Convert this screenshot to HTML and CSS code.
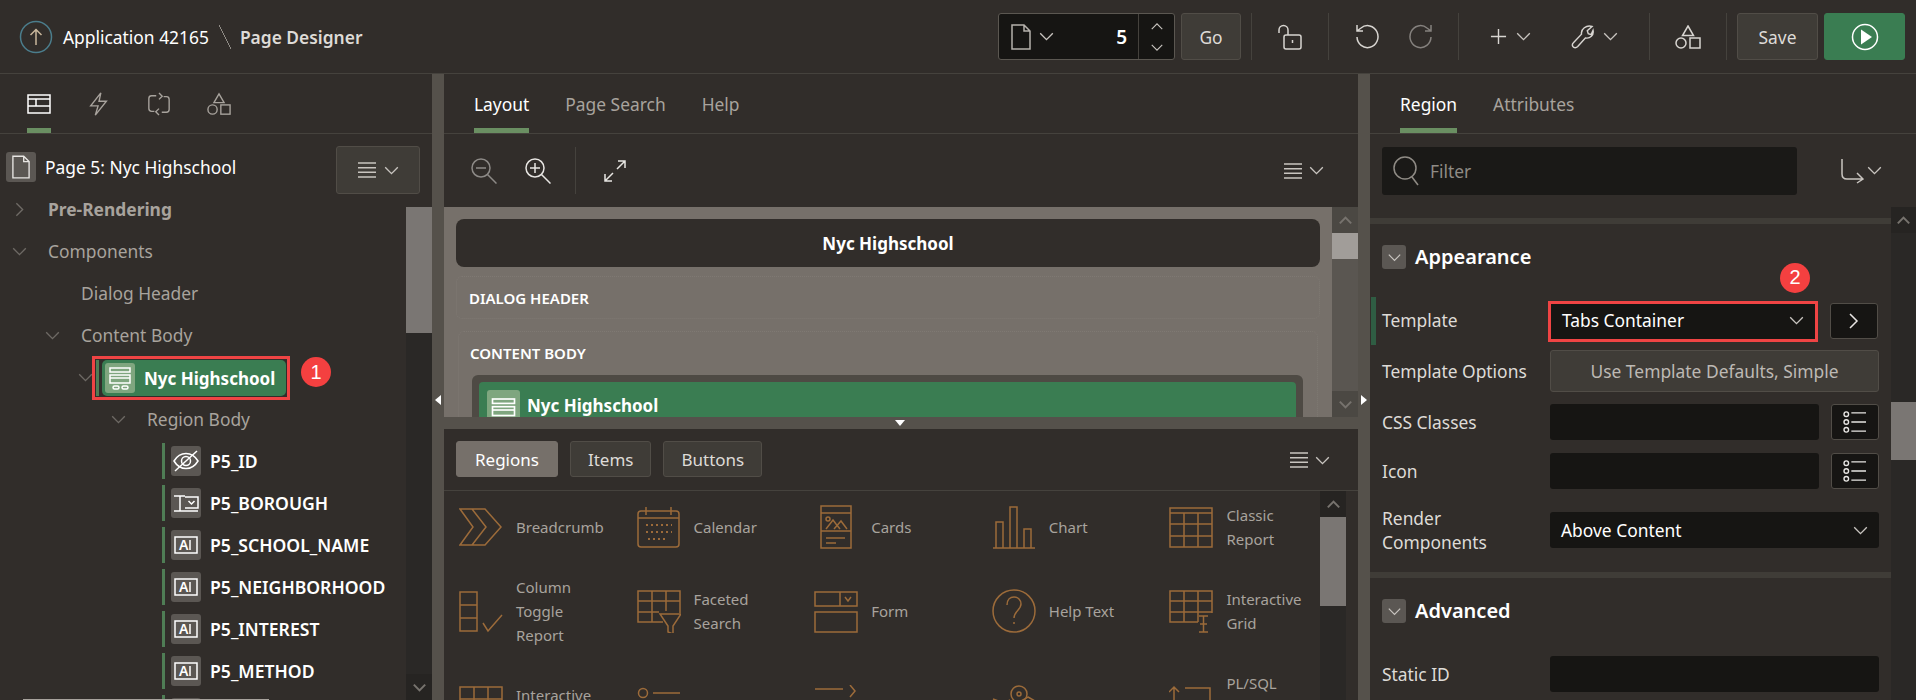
FILE: index.html
```html
<!DOCTYPE html>
<html lang="en">
<head>
    <meta charset="UTF-8">
    <meta name="viewport" content="width=device-width, initial-scale=1.0">
    <title>Page Designer</title>
    <link rel="stylesheet" href="styles.css">
</head>
<body>
    <svg class="sprite" xmlns="http://www.w3.org/2000/svg">
        <symbol id="chev" viewBox="0 0 16 10"><path d="M1 1.5l7 7 7-7"/></symbol>
        <symbol id="lines" viewBox="0 0 18 16"><path d="M0 1h18M0 5.700h18M0 10.300h18M0 15h18"/></symbol>
        <symbol id="shapes" viewBox="0 0 26 24"><path d="M13 1l5.500 9.500h-11z"/><circle cx="6" cy="18" r="5"/><rect x="15" y="13" width="10" height="10"/></symbol>
        <symbol id="file" viewBox="0 0 20 26"><path d="M1 1h12l6 6v18H1zM13 1v6h6"/></symbol>
        <symbol id="zoom-out" viewBox="0 0 26 26"><circle cx="10" cy="10" r="9"/><path d="M16.500 16.500l9 9M5 10h10"/></symbol>
        <symbol id="zoom-in" viewBox="0 0 26 26"><circle cx="10" cy="10" r="9"/><path d="M16.500 16.500l9 9M5 10h10M10 5v10"/></symbol>
        <symbol id="list" viewBox="0 0 26 24"><circle cx="3.500" cy="3.500" r="2.500"/><circle cx="3.500" cy="12" r="2.500"/><circle cx="3.500" cy="20.500" r="2.500"/><path d="M9 2h16M9 12h16M9 22h16"/></symbol>
        <symbol id="region" viewBox="0 0 24 20"><rect x="1" y="1" width="22" height="18"/><path d="M1 5h22M1 12h22M9 5v7"/></symbol>
        <symbol id="region-tile" viewBox="0 0 30 30"><rect x="5" y="5" width="20" height="4"/><rect x="5" y="12" width="20" height="8"/><rect x="8" y="23" width="6" height="3" rx="1.500"/><rect x="17" y="23" width="6" height="3" rx="1.500"/><path d="M5 15h20"/></symbol>
        <symbol id="text-field" viewBox="0 0 30 30"><rect x="4" y="7" width="22" height="16"/><path d="M19 10v10"/><text x="8" y="20" class="glyph">A</text></symbol>
    </svg>

    <header class="topbar">
        <div class="crumbs">
            <svg class="app-up" viewBox="0 0 34 34"><circle class="ring" cx="17" cy="17" r="15.500"/><path d="M17 25V10M11.500 15l5.500-5.500 5.500 5.500"/></svg>
            <span class="app-name">Application 42165</span>
            <span class="slash"></span>
            <span class="page-name">Page Designer</span>
        </div>
        <div class="tools">
            <div class="page-picker">
                <svg class="ic-file"><use href="#file"/></svg>
                <svg class="ic-chev"><use href="#chev"/></svg>
                <span class="page-num">5</span>
                <div class="stepper">
                    <svg class="ic-chev up"><use href="#chev"/></svg>
                    <svg class="ic-chev"><use href="#chev"/></svg>
                </div>
            </div>
            <button class="btn go">Go</button>
            <i class="sep first"></i>
            <div class="tool-group w76">
                <svg class="ic-lock" viewBox="0 0 26 26"><path d="M2 9V6a4.500 4.500 0 0 1 9 0v5"/><rect x="7" y="11" width="17" height="14" rx="2"/><path d="M15.500 16v3"/></svg>
            </div>
            <i class="sep"></i>
            <div class="tool-group w129 gap28">
                <svg class="ic-undo" viewBox="0 0 26 26"><path d="M3 13a10.500 11 0 1 0 4-9l-4 3M3 1v6h6"/></svg>
                <svg class="ic-undo dim" viewBox="0 0 26 26"><path d="M23 13a10.500 11 0 1 1-4-9l4 3M23 1v6h-6"/></svg>
            </div>
            <i class="sep"></i>
            <div class="tool-group w190 gap40">
                <span class="with-chev"><svg class="ic-plus" viewBox="0 0 18 18"><path d="M9 1v16M1 9h16"/></svg><svg class="ic-chev"><use href="#chev"/></svg></span>
                <span class="with-chev"><svg class="ic-wrench" viewBox="0 0 24 26"><path d="M22 2l-5 4.500 1 3 3 1L23 6c1 5-3 9-8 8L7 23c-1.500 1.500-4 1.500-5 0s-.5-3 .5-4L11 10c-1-5 5-10 11-8z"/></svg><svg class="ic-chev"><use href="#chev"/></svg></span>
            </div>
            <i class="sep"></i>
            <div class="tool-group w76"><svg class="ic-shapes"><use href="#shapes"/></svg></div>
            <i class="sep last"></i>
            <button class="btn save">Save</button>
            <button class="btn run">
                <svg viewBox="0 0 28 28"><circle cx="14" cy="14" r="12.500"/><path class="play" d="M10 6.500l11 7.500-11 7.500z"/></svg>
            </button>
        </div>
    </header>

    <main class="designer">
        <section class="panel tree-panel">
            <nav class="tabs icon-tabs">
                <span class="tab active"><svg class="ic-tab"><use href="#region"/></svg></span>
                <span class="tab"><svg class="ic-tab" viewBox="0 0 24 26"><path d="M14 1L3 15h8l-3 10 12-15h-8z"/></svg></span>
                <span class="tab"><svg class="ic-tab" viewBox="0 0 26 26"><path d="M10 4H5a3 3 0 0 0-3 3v11a3 3 0 0 0 3 3h3M16 22h5a3 3 0 0 0 3-3V8a3 3 0 0 0-3-3h-3M13 1l3.500 3.500L13 8M13 18l-3.500 3.500L13 25"/></svg></span>
                <span class="tab"><svg class="ic-tab"><use href="#shapes"/></svg></span>
            </nav>
            <div class="tree-wrap">
                <div class="page-row">
                    <span class="page-tile"><svg><use href="#file"/></svg></span>
                    <span class="page-title">Page 5: Nyc Highschool</span>
                    <button class="btn menu-btn"><svg class="ic-lines"><use href="#lines"/></svg><svg class="ic-chev"><use href="#chev"/></svg></button>
                </div>
                <div class="tree">
                    <div class="node l0 strong"><svg class="ic-chev side"><use href="#chev"/></svg><span>Pre-Rendering</span></div>
                    <div class="node l0"><svg class="ic-chev open"><use href="#chev"/></svg><span>Components</span></div>
                    <div class="node l1"><i class="no-chev"></i><span>Dialog Header</span></div>
                    <div class="node l1"><svg class="ic-chev open"><use href="#chev"/></svg><span>Content Body</span></div>
                    <div class="node l2">
                        <svg class="ic-chev open tight"><use href="#chev"/></svg>
                        <div class="marked">
                            <i class="mark-bar"></i>
                            <div class="pill">
                                <span class="pill-tile"><svg><use href="#region-tile"/></svg></span>
                                <span>Nyc Highschool</span>
                            </div>
                            <b class="badge badge-one">1</b>
                        </div>
                    </div>
                    <div class="node l3"><svg class="ic-chev open"><use href="#chev"/></svg><span>Region Body</span></div>
                    <div class="item"><i class="mark-bar"></i><span class="tile"><svg viewBox="0 0 30 30"><path d="M3 15c3-5 7.500-7.500 12-7.500S24 10 27 15c-3 5-7.500 7.500-12 7.500S6 20 3 15z"/><circle cx="15" cy="15" r="4.500"/><path d="M4 25L26 5"/></svg></span><span>P5_ID</span></div>
                    <div class="item"><i class="mark-bar"></i><span class="tile"><svg viewBox="0 0 30 30"><path d="M3 8h11M3 23h24M9 8v15M14 9h13v11H14"/><path d="M17.500 13l3 3 3-3"/></svg></span><span>P5_BOROUGH</span></div>
                    <div class="item"><i class="mark-bar"></i><span class="tile"><svg><use href="#text-field"/></svg></span><span>P5_SCHOOL_NAME</span></div>
                    <div class="item"><i class="mark-bar"></i><span class="tile"><svg><use href="#text-field"/></svg></span><span>P5_NEIGHBORHOOD</span></div>
                    <div class="item"><i class="mark-bar"></i><span class="tile"><svg><use href="#text-field"/></svg></span><span>P5_INTEREST</span></div>
                    <div class="item"><i class="mark-bar"></i><span class="tile"><svg><use href="#text-field"/></svg></span><span>P5_METHOD</span></div>
                    <div class="item"><i class="mark-bar"></i><span class="tile"><svg><use href="#text-field"/></svg></span></div>
                </div>
                <div class="scrollbar tree-scroll">
                    <i class="sb-thumb" ></i>
                    <i class="sb-fill"></i>
                    <span class="sb-arrow"><svg class="ic-chev"><use href="#chev"/></svg></span>
                </div>
                <i class="h-thumb"></i>
            </div>
        </section>

        <div class="gutter"><i class="tri tri-left"></i></div>

        <section class="center">
            <div class="panel layout-pane">
                <nav class="tabs">
                    <span class="tab active">Layout</span>
                    <span class="tab">Page Search</span>
                    <span class="tab">Help</span>
                </nav>
                <div class="layout-tools">
                    <svg class="ic-zoom dim"><use href="#zoom-out"/></svg>
                    <svg class="ic-zoom"><use href="#zoom-in"/></svg>
                    <i class="sep"></i>
                    <svg class="ic-expand" viewBox="0 0 22 22"><path d="M13 9l8-8M14 1h7v7M9 13l-8 8M1 14v7h7"/></svg>
                    <span class="bare-menu"><svg class="ic-lines"><use href="#lines"/></svg><svg class="ic-chev"><use href="#chev"/></svg></span>
                </div>
                <div class="canvas-row">
                    <div class="canvas">
                        <div class="canvas-title">Nyc Highschool</div>
                        <div class="slot dialog-slot">DIALOG HEADER</div>
                        <div class="slot body-slot">
                            <div class="slot-name">CONTENT BODY</div>
                            <div class="region-box">
                                <div class="region-head">
                                    <span class="pill-tile tall"><svg><use href="#region-tile"/></svg></span>
                                    <span>Nyc Highschool</span>
                                </div>
                            </div>
                        </div>
                    </div>
                    <div class="scrollbar canvas-scroll">
                        <span class="sb-arrow"><svg class="ic-chev flip"><use href="#chev"/></svg></span>
                        <i class="sb-thumb"></i>
                        <i class="sb-fill"></i>
                        <span class="sb-arrow"><svg class="ic-chev"><use href="#chev"/></svg></span>
                    </div>
                </div>
            </div>

            <div class="gutter-h"><i class="tri tri-down"></i></div>

            <div class="panel gallery-pane">
                <div class="gallery-tabs">
                    <button class="btn chip active">Regions</button>
                    <button class="btn chip">Items</button>
                    <button class="btn chip">Buttons</button>
                    <span class="bare-menu"><svg class="ic-lines"><use href="#lines"/></svg><svg class="ic-chev"><use href="#chev"/></svg></span>
                </div>
                <div class="gallery-row">
                    <div class="gallery">
                        <div class="g-item"><svg viewBox="0 0 44 44"><path d="M1 4h25l16 18-16 18H1l13-18zM13 4l14 18-14 18"/></svg><span>Breadcrumb</span></div>
                        <div class="g-item"><svg viewBox="0 0 44 44"><rect x="1" y="6" width="41" height="36" rx="3"/><path d="M1 13h41M9 2v8M34 2v8"/><path class="dots" d="M9 20h26M9 27h26M11 34h19"/></svg><span>Calendar</span></div>
                        <div class="g-item"><svg viewBox="0 0 44 44"><rect x="7" y="1" width="30" height="42"/><path d="M7 8h30M7 26h30M12 33h19M12 38h10M12 24l7-9 3 4 4 5M20 24l7-8 6 8"/><circle cx="14" cy="14" r="2"/></svg><span>Cards</span></div>
                        <div class="g-item"><svg viewBox="0 0 44 44"><path d="M1 43h42M4 43V17h7v26M18 43V2h7v41M32 43V24h7v19"/></svg><span>Chart</span></div>
                        <div class="g-item"><svg viewBox="0 0 44 44"><rect x="1" y="3" width="42" height="39"/><path d="M1 8h42M1 19h42M1 31h42M15 8v34M29 8v34"/></svg><span>Classic Report</span></div>
                        <div class="g-item"><svg viewBox="0 0 44 44"><rect x="1" y="3" width="17" height="39"/><path d="M1 16h17M1 29h17M24 34l5 8 14-16"/></svg><span>Column Toggle Report</span></div>
                        <div class="g-item"><svg viewBox="0 0 44 44"><path d="M26 33H1V2h42v22M1 12h42M1 23h21M15 2v31M29 2v20"/><path d="M23 25h21l-8 12v8l-5-2v-6z"/></svg><span>Faceted Search</span></div>
                        <div class="g-item"><svg viewBox="0 0 44 44"><rect x="1" y="3" width="42" height="14"/><path d="M26 3v14M31 8l3 4 3-4"/><rect x="1" y="23" width="42" height="20"/></svg><span>Form</span></div>
                        <div class="g-item"><svg viewBox="0 0 44 44"><ellipse cx="22" cy="22" rx="21" ry="21"/><path d="M15 16c0-5 3-8 7-8s7 3 7 7c0 6-7 7-7 14M22 33v2"/></svg><span>Help Text</span></div>
                        <div class="g-item"><svg viewBox="0 0 44 44"><path d="M29 33H1V2h42v22M1 12h42M1 23h42M15 2v31M29 2v31"/><path d="M30 27h9M34.500 27v16M30 43h9M31 35h7"/></svg><span>Interactive Grid</span></div>
                        <div class="g-item"><svg viewBox="0 0 44 44"><rect x="1" y="2" width="42" height="40"/><path d="M1 14h42M1 28h42M15 2v40M29 2v40"/></svg><span>Interactive Report</span></div>
                        <div class="g-item"><svg viewBox="0 0 44 44"><circle cx="6" cy="8" r="4.500"/><path d="M16 8h27M16 22h27"/><circle cx="6" cy="22" r="4.500"/></svg></div>
                        <div class="g-item"><svg viewBox="0 0 44 44"><path d="M1 4h28M36 0l5 6-5 6M1 20h28M36 17l5 6-5 6"/></svg></div>
                        <div class="g-item"><svg viewBox="0 0 44 44"><circle cx="27" cy="9" r="8"/><circle cx="27" cy="9" r="2"/><path d="M1 14l11 4 6-3M36 12l7 4v20L30 32 14 38 1 32z"/></svg></div>
                        <div class="g-item"><svg viewBox="0 0 44 44"><path d="M5 28V2M0 7l5-5 5 5M16 3h25v22M17 16h11M17 23h7"/></svg><span>PL/SQL Dynamic Content</span></div>
                    </div>
                    <div class="scrollbar gallery-scroll">
                        <span class="sb-arrow"><svg class="ic-chev flip"><use href="#chev"/></svg></span>
                        <i class="sb-thumb"></i>
                        <i class="sb-fill"></i>
                    </div>
                </div>
            </div>
        </section>

        <div class="gutter"><i class="tri tri-right"></i></div>

        <section class="panel props">
            <nav class="tabs">
                <span class="tab active">Region</span>
                <span class="tab">Attributes</span>
            </nav>
            <div class="filter-bar">
                <div class="filter">
                    <svg viewBox="0 0 26 30"><circle cx="12" cy="12" r="11"/><path d="M19 21l6 8"/></svg>
                    <span>Filter</span>
                </div>
                <svg class="ic-goto" viewBox="0 0 24 26"><path d="M2 1v15c0 3 2 5 5 5h16M17 15l6 6-6 4"/></svg>
                <svg class="ic-chev"><use href="#chev"/></svg>
            </div>
            <div class="props-row">
                <div class="props-body">
                    <div class="section">
                        <div class="section-head"><span class="collapse"><svg class="ic-chev"><use href="#chev"/></svg></span><h3>Appearance</h3></div>
                        <div class="field changed">
                            <label>Template</label>
                            <div class="ctl">
                                <div class="marked-select">
                                    <div class="select">Tabs Container<svg class="ic-chev"><use href="#chev"/></svg></div>
                                    <b class="badge badge-two">2</b>
                                </div>
                                <button class="side-btn"><svg class="ic-go" viewBox="0 0 10 16"><path d="M1 1l7 7-7 7"/></svg></button>
                            </div>
                        </div>
                        <div class="field h52">
                            <label>Template Options</label>
                            <div class="ctl"><button class="btn options">Use Template Defaults, Simple</button></div>
                        </div>
                        <div class="field h50">
                            <label>CSS Classes</label>
                            <div class="ctl"><div class="input"></div><button class="side-btn"><svg class="ic-list"><use href="#list"/></svg></button></div>
                        </div>
                        <div class="field h47">
                            <label>Icon</label>
                            <div class="ctl"><div class="input"></div><button class="side-btn"><svg class="ic-list"><use href="#list"/></svg></button></div>
                        </div>
                        <div class="field h72">
                            <label>Render<br>Components</label>
                            <div class="ctl"><div class="select wide">Above Content<svg class="ic-chev"><use href="#chev"/></svg></div></div>
                        </div>
                    </div>
                    <div class="section">
                        <div class="section-head"><span class="collapse"><svg class="ic-chev"><use href="#chev"/></svg></span><h3>Advanced</h3></div>
                        <div class="field static">
                            <label>Static ID</label>
                            <div class="ctl"><div class="input wide"></div></div>
                        </div>
                    </div>
                </div>
                <div class="scrollbar props-scroll">
                    <span class="sb-arrow"><svg class="ic-chev flip"><use href="#chev"/></svg></span>
                    <i class="sb-gap"></i>
                    <i class="sb-thumb"></i>
                    <i class="sb-fill"></i>
                </div>
            </div>
        </section>
    </main>
</body>
</html>
```

FILE: styles.css
```css
* {
    box-sizing: border-box;
}

html, body {
    height: 100%;
}

body {
    margin: 0;
    overflow: hidden;
    background-color: #312d2a;
    color: #fff;
    font-family: "Noto Sans", "Open Sans", sans-serif;
    font-size: 17.4px;
}

svg {
    display: block;
    flex: none;
    fill: none;
    stroke: currentColor;
    stroke-width: 1.5;
}

i {
    display: block;
    flex: none;
}

button {
    font: inherit;
    color: inherit;
}

.sprite {
    display: none;
}

.glyph {
    font-family: "Noto Sans", sans-serif;
    font-size: 14px;
    fill: currentColor;
    stroke: none;
}

.btn {
    background-color: #3f3c37;
    border: 1px solid #514d47;
    border-radius: 3px;
    cursor: pointer;
    padding: 0;
}

.ic-chev {
    width: 15px;
    height: 9px;
    color: #c9c5c0;
}

.ic-lines {
    width: 18px;
    height: 16px;
    color: #c9c5c0;
}

/* top bar */
.topbar {
    height: 74px;
    border-bottom: 1px solid #45423d;
    display: flex;
    align-items: center;
    justify-content: space-between;
    padding: 0 11px 0 19px;
}

.crumbs {
    display: flex;
    align-items: center;
}

.app-up {
    width: 34px;
    height: 34px;
    color: #c9b79c;
    margin-right: 10px;
}

.app-up .ring {
    stroke: #4b7d8c;
}

.slash {
    width: 12px;
    height: 24px;
    margin: 0 9px 0 10px;
    background: linear-gradient(to top right, transparent 47%, #8f8b85 47%, #8f8b85 53%, transparent 53%);
}

.page-name {
    font-weight: 600;
    color: #dedbd7;
}

.tools {
    display: flex;
    align-items: center;
    height: 47px;
}

.page-picker {
    width: 177px;
    height: 47px;
    background-color: #161513;
    border: 1px solid #5b5751;
    border-radius: 3px;
    display: flex;
    align-items: center;
    padding-left: 12px;
}

.ic-file {
    width: 20px;
    height: 26px;
    color: #b5b1ac;
    margin-right: 8px;
}

.page-num {
    margin-left: auto;
    margin-right: 11px;
    font-weight: 600;
    font-size: 19px;
}

.stepper {
    width: 36px;
    height: 100%;
    border-left: 1px solid #45423d;
    display: flex;
    flex-direction: column;
    align-items: center;
    justify-content: center;
    gap: 12px;
}

.stepper .ic-chev {
    width: 12px;
}

.up, .flip {
    transform: rotate(180deg);
}

.go {
    width: 60px;
    height: 47px;
    margin-left: 6px;
    color: #dedbd7;
}

.sep {
    width: 1px;
    height: 47px;
    background-color: #45423d;
}

.sep.first {
    margin-left: 10px;
}

.sep.last {
    margin-right: 10px;
}

.tool-group {
    display: flex;
    align-items: center;
    justify-content: center;
    color: #d8d5d1;
}

.w76 {
    width: 76px;
}

.w129 {
    width: 129px;
}

.w190 {
    width: 190px;
}

.gap28 {
    gap: 28px;
}

.gap40 {
    gap: 40px;
}

.ic-lock, .ic-undo {
    width: 26px;
    height: 26px;
}

.dim {
    opacity: 0.5;
}

.with-chev {
    display: flex;
    align-items: center;
    gap: 9px;
}

.ic-plus {
    width: 17px;
    height: 17px;
}

.ic-wrench {
    width: 23px;
    height: 26px;
}

.ic-shapes {
    width: 26px;
    height: 24px;
}

.save {
    width: 81px;
    height: 47px;
    color: #dedbd7;
}

.run {
    width: 81px;
    height: 47px;
    margin-left: 6px;
    background-color: #3a7d52;
    border-color: #3a7d52;
    display: flex;
    align-items: center;
    justify-content: center;
}

.run svg {
    width: 28px;
    height: 28px;
}

.play {
    fill: #fff;
    stroke: none;
}

/* main layout */
.designer {
    display: grid;
    grid-template-columns: 432px 12px 914px 12px 546px;
    height: 626px;
}

.gutter {
    background-color: #55514b;
    position: relative;
}

.gutter-h {
    height: 12px;
    background-color: #55514b;
    position: relative;
}

.tri {
    position: absolute;
    width: 0;
    height: 0;
    border-style: solid;
    border-color: transparent;
}

.tri-left {
    left: 3px;
    top: 321px;
    border-width: 5px 6px 5px 0;
    border-right-color: #fff;
}

.tri-right {
    left: 3px;
    top: 321px;
    border-width: 5px 0 5px 6px;
    border-left-color: #fff;
}

.tri-down {
    left: 451px;
    top: 3px;
    border-width: 6px 5px 0 5px;
    border-top-color: #fff;
}

.panel {
    min-width: 0;
    overflow: hidden;
}

.tabs {
    height: 60px;
    border-bottom: 1px solid #45423d;
    display: flex;
    gap: 36px;
    padding-left: 30px;
}

.tab {
    height: 59px;
    padding-top: 5px;
    border-bottom: 5px solid transparent;
    display: flex;
    align-items: center;
    color: #a8a39d;
}

.tab.active {
    color: #fff;
    border-bottom-color: #6a8f62;
}

/* left tree */
.icon-tabs {
    padding-left: 27px;
}

.ic-tab {
    width: 24px;
    height: 24px;
    color: #a8a39d;
}

.active .ic-tab {
    height: 20px;
    color: #fff;
}

.tree-wrap {
    display: grid;
    grid-template-columns: 406px 26px;
    grid-template-rows: 54px 19px 1fr;
    height: 566px;
    position: relative;
}

.page-row {
    grid-column: 1 / 3;
    grid-row: 1;
    display: flex;
    align-items: flex-start;
    padding: 12px 12px 0 6px;
}

.page-tile {
    width: 30px;
    height: 30px;
    margin: 6px 9px 0 0;
    border-radius: 3px;
    background-color: #5b5753;
    display: flex;
    align-items: center;
    justify-content: center;
    color: #e8e6e3;
}

.page-tile svg {
    width: 18px;
    height: 24px;
}

.page-title {
    margin-top: 6px;
    line-height: 30px;
}

.menu-btn {
    width: 84px;
    height: 48px;
    margin-left: auto;
    display: flex;
    align-items: center;
    justify-content: center;
    gap: 8px;
    position: relative;
}

.tree {
    grid-column: 1;
    grid-row: 2 / 4;
    overflow: hidden;
}

.node {
    height: 42px;
    display: flex;
    align-items: center;
    color: #a8a39d;
}

.node .ic-chev {
    color: #6e6a65;
    margin-right: 21px;
}

.node .ic-chev.tight {
    margin-right: -1px;
}

.no-chev {
    width: 15px;
    margin-right: 21px;
}

.ic-chev.side {
    transform: rotate(-90deg);
}

.strong {
    font-weight: 700;
}

.l0 {
    padding-left: 12px;
}

.l1 {
    padding-left: 45px;
}

.l2 {
    padding-left: 78px;
}

.l3 {
    padding-left: 111px;
}

.marked {
    position: relative;
    width: 198px;
    height: 44px;
    margin-top: 2px;
    border: 3px solid #ef4444;
    display: flex;
    align-items: center;
    padding-left: 1px;
}

.mark-bar {
    width: 3px;
    height: 36px;
    background-color: #4f7d55;
}

.pill {
    width: 184px;
    height: 36px;
    margin-left: 3px;
    border-radius: 5px;
    background-color: #3a7d52;
    color: #fff;
    display: flex;
    align-items: center;
    padding-left: 3px;
    font-size: 17px;
    font-weight: 700;
    gap: 9px;
}

.pill-tile {
    width: 30px;
    height: 30px;
    border-radius: 3px;
    background-color: #7fa67f;
    color: #fff;
}

.pill-tile svg {
    width: 30px;
    height: 30px;
}

.badge {
    position: absolute;
    width: 30px;
    height: 30px;
    border-radius: 50%;
    background-color: #f44040;
    color: #fff;
    display: flex;
    align-items: center;
    justify-content: center;
    font-family: "Liberation Sans", sans-serif;
    font-size: 20px;
    font-weight: 400;
}

.badge-one {
    left: 206px;
    top: -2px;
}

.badge-two {
    left: 229px;
    top: -41px;
}

.item {
    height: 42px;
    padding-left: 162px;
    display: flex;
    align-items: center;
    font-size: 17.6px;
    font-weight: 600;
}

.tile {
    width: 30px;
    height: 30px;
    margin: 0 9px 0 6px;
    border-radius: 3px;
    background-color: #5b5753;
}

.tile svg {
    width: 30px;
    height: 30px;
}

.h-thumb {
    position: absolute;
    left: 23px;
    bottom: 0;
    width: 246px;
    height: 1px;
    background-color: #a8a39d;
}

/* scrollbars */
.scrollbar {
    background-color: #2a2826;
    display: flex;
    flex-direction: column;
}

.tree-scroll {
    grid-column: 2;
    grid-row: 3;
}

.sb-thumb {
    background-color: #7a7673;
}

.sb-fill {
    flex: 1;
}

.sb-arrow {
    height: 26px;
    background-color: #262422;
    display: flex;
    align-items: center;
    justify-content: center;
    flex: none;
}

.sb-arrow .ic-chev {
    width: 13px;
    color: #77736e;
    stroke-width: 2.5;
}

.tree-scroll .sb-thumb {
    height: 126px;
}

.canvas-scroll {
    background-color: #5a5651;
    width: 26px;
}

.canvas-scroll .sb-thumb {
    height: 26px;
    background-color: #a19d99;
}

.canvas-scroll .sb-arrow {
    background-color: #4b4843;
}

.gallery-scroll, .props-scroll {
    width: 26px;
}

.gallery-scroll .sb-thumb {
    height: 89px;
}

.sb-gap {
    height: 169px;
}

.props-scroll .sb-thumb {
    height: 58px;
}

/* center column */
.center {
    display: flex;
    flex-direction: column;
    min-width: 0;
}

.layout-pane {
    height: 343px;
    display: flex;
    flex-direction: column;
}

.layout-tools {
    height: 73px;
    display: flex;
    align-items: center;
    padding: 0 34px 0 27px;
    flex: none;
}

.ic-zoom {
    width: 26px;
    height: 26px;
    margin-right: 28px;
    color: #e8e6e3;
}

.layout-tools .sep {
    margin-right: 28px;
    margin-left: -4px;
}

.ic-expand {
    width: 22px;
    height: 22px;
    color: #e8e6e3;
}

.bare-menu {
    margin-left: auto;
    display: flex;
    align-items: center;
    gap: 7px;
}

.canvas-row {
    flex: 1;
    display: flex;
    min-height: 0;
}

.canvas {
    flex: 1;
    background-color: #76706a;
    padding: 12px 12px 0;
    overflow: hidden;
}

.canvas-title {
    height: 48px;
    background-color: #312d2a;
    border-radius: 8px;
    display: flex;
    align-items: center;
    justify-content: center;
    font-size: 17px;
    font-weight: 700;
}

.slot {
    border: 1px dotted #7f7973;
    border-radius: 6px;
    font-size: 15px;
    font-weight: 600;
}

.dialog-slot {
    height: 43px;
    margin-top: 9px;
    padding-left: 12px;
    display: flex;
    align-items: center;
}

.body-slot {
    height: 200px;
    margin: 12px 2px 0;
    padding: 0 14px 0 13px;
}

.slot-name {
    height: 41px;
    margin: 0 0 2px -2px;
    display: flex;
    align-items: center;
}

.region-box {
    height: 150px;
    background-color: #4e4a44;
    border-radius: 6px;
    padding: 7px 7px 0;
}

.region-head {
    height: 120px;
    background-color: #3a7d52;
    border-radius: 4px;
    display: flex;
    align-items: flex-start;
    padding: 8px 0 0 8px;
    gap: 7px;
    font-size: 17px;
    font-weight: 700;
}

.pill-tile.tall {
    width: 33px;
    height: 40px;
}

.pill-tile.tall svg {
    width: 33px;
    height: 40px;
}

.region-head span:last-child {
    margin-top: 4px;
}

/* gallery */
.gallery-pane {
    height: 271px;
}

.gallery-tabs {
    height: 62px;
    border-bottom: 1px solid #45423d;
    display: flex;
    align-items: flex-start;
    padding: 12px 28px 0 12px;
    gap: 12px;
}

.gallery-tabs .bare-menu {
    margin-top: 11px;
}

.chip {
    height: 36px;
    padding: 0 17px;
    color: #dedbd7;
    font-size: 17px;
}

.chip.active {
    padding: 0 18px;
    background-color: #76706a;
    border-color: #76706a;
    color: #fff;
}

.gallery-row {
    display: flex;
    height: 209px;
}

.gallery {
    width: 888px;
    flex: none;
    margin-right: -12px;
    display: grid;
    grid-template-columns: repeat(5, 177.6px);
    row-gap: 24px;
    padding: 12px 0 0 15px;
    align-items: center;
    overflow: hidden;
    font-size: 15px;
    line-height: 24px;
    color: #a8a39d;
}

.g-item {
    display: flex;
    align-items: center;
    gap: 13px;
    padding-right: 40px;
}

.g-item svg {
    width: 44px;
    height: 44px;
    color: #9c6b3a;
}

.dots {
    stroke-dasharray: 2 3;
    stroke-width: 2;
}

/* right panel */
.filter-bar {
    height: 73px;
    display: flex;
    align-items: center;
    padding: 0 0 0 12px;
}

.filter {
    width: 415px;
    height: 48px;
    background-color: #1a1917;
    border-radius: 3px;
    display: flex;
    align-items: center;
    padding-left: 11px;
    color: #8f8b85;
    gap: 11px;
}

.filter svg {
    width: 26px;
    height: 30px;
}

.ic-goto {
    width: 24px;
    height: 26px;
    margin-left: 43px;
    margin-right: 3px;
    color: #c9c5c0;
}

.props-row {
    display: flex;
    height: 493px;
}

.props-body {
    width: 521px;
    flex: none;
    padding-top: 11px;
    overflow: hidden;
}

.section {
    border-top: 6px solid #3f3c37;
    margin-bottom: 6px;
}

.section-head {
    height: 73px;
    padding: 21px 0 0 12px;
    display: flex;
    align-items: flex-start;
    gap: 9px;
}

.collapse {
    width: 24px;
    height: 24px;
    border-radius: 3px;
    background-color: #5b5753;
    display: flex;
    align-items: center;
    justify-content: center;
}

.collapse .ic-chev {
    width: 13px;
}

h3 {
    margin: -3px 0 0;
    font-size: 20px;
    line-height: 30px;
    font-weight: 600;
}

.field {
    display: flex;
    align-items: center;
    padding-left: 12px;
    color: #dedbd7;
}

.field label {
    width: 168px;
    flex: none;
    line-height: 24px;
}

.field.changed {
    height: 48px;
    margin-left: 1px;
    padding-left: 6px;
    border-left: 5px solid #2f5d43;
}

.field.changed label {
    margin-top: -2px;
}

.h52 {
    height: 52px;
}

.h50 {
    height: 50px;
}

.h47 {
    height: 47px;
}

.h72 {
    height: 72px;
}

.static {
    height: 46px;
    margin-top: 0;
}

.ctl {
    display: flex;
    align-items: center;
    gap: 12px;
    color: #fff;
}

.marked-select {
    position: relative;
    width: 270px;
    height: 41px;
    margin-left: -2px;
    border: 3px solid #ef4444;
}

.select {
    height: 36px;
    width: 100%;
    background-color: #161513;
    border-radius: 3px;
    display: flex;
    align-items: center;
    justify-content: space-between;
    padding: 0 11px;
}

.marked-select .select {
    height: 35px;
    border-radius: 0;
    padding-bottom: 2px;
}

.select.wide {
    width: 329px;
}

.input {
    width: 269px;
    height: 36px;
    background-color: #161513;
    border-radius: 3px;
}

.input.wide {
    width: 329px;
}

.side-btn {
    width: 48px;
    height: 36px;
    background-color: #161513;
    border: 1px solid #514d47;
    border-radius: 3px;
    display: flex;
    align-items: center;
    justify-content: center;
    color: #e8e6e3;
    padding: 0;
}

.ic-go {
    width: 10px;
    height: 16px;
}

.ic-list {
    width: 26px;
    height: 22px;
}

.options {
    width: 329px;
    height: 42px;
    color: #bdb9b4;
}
```
